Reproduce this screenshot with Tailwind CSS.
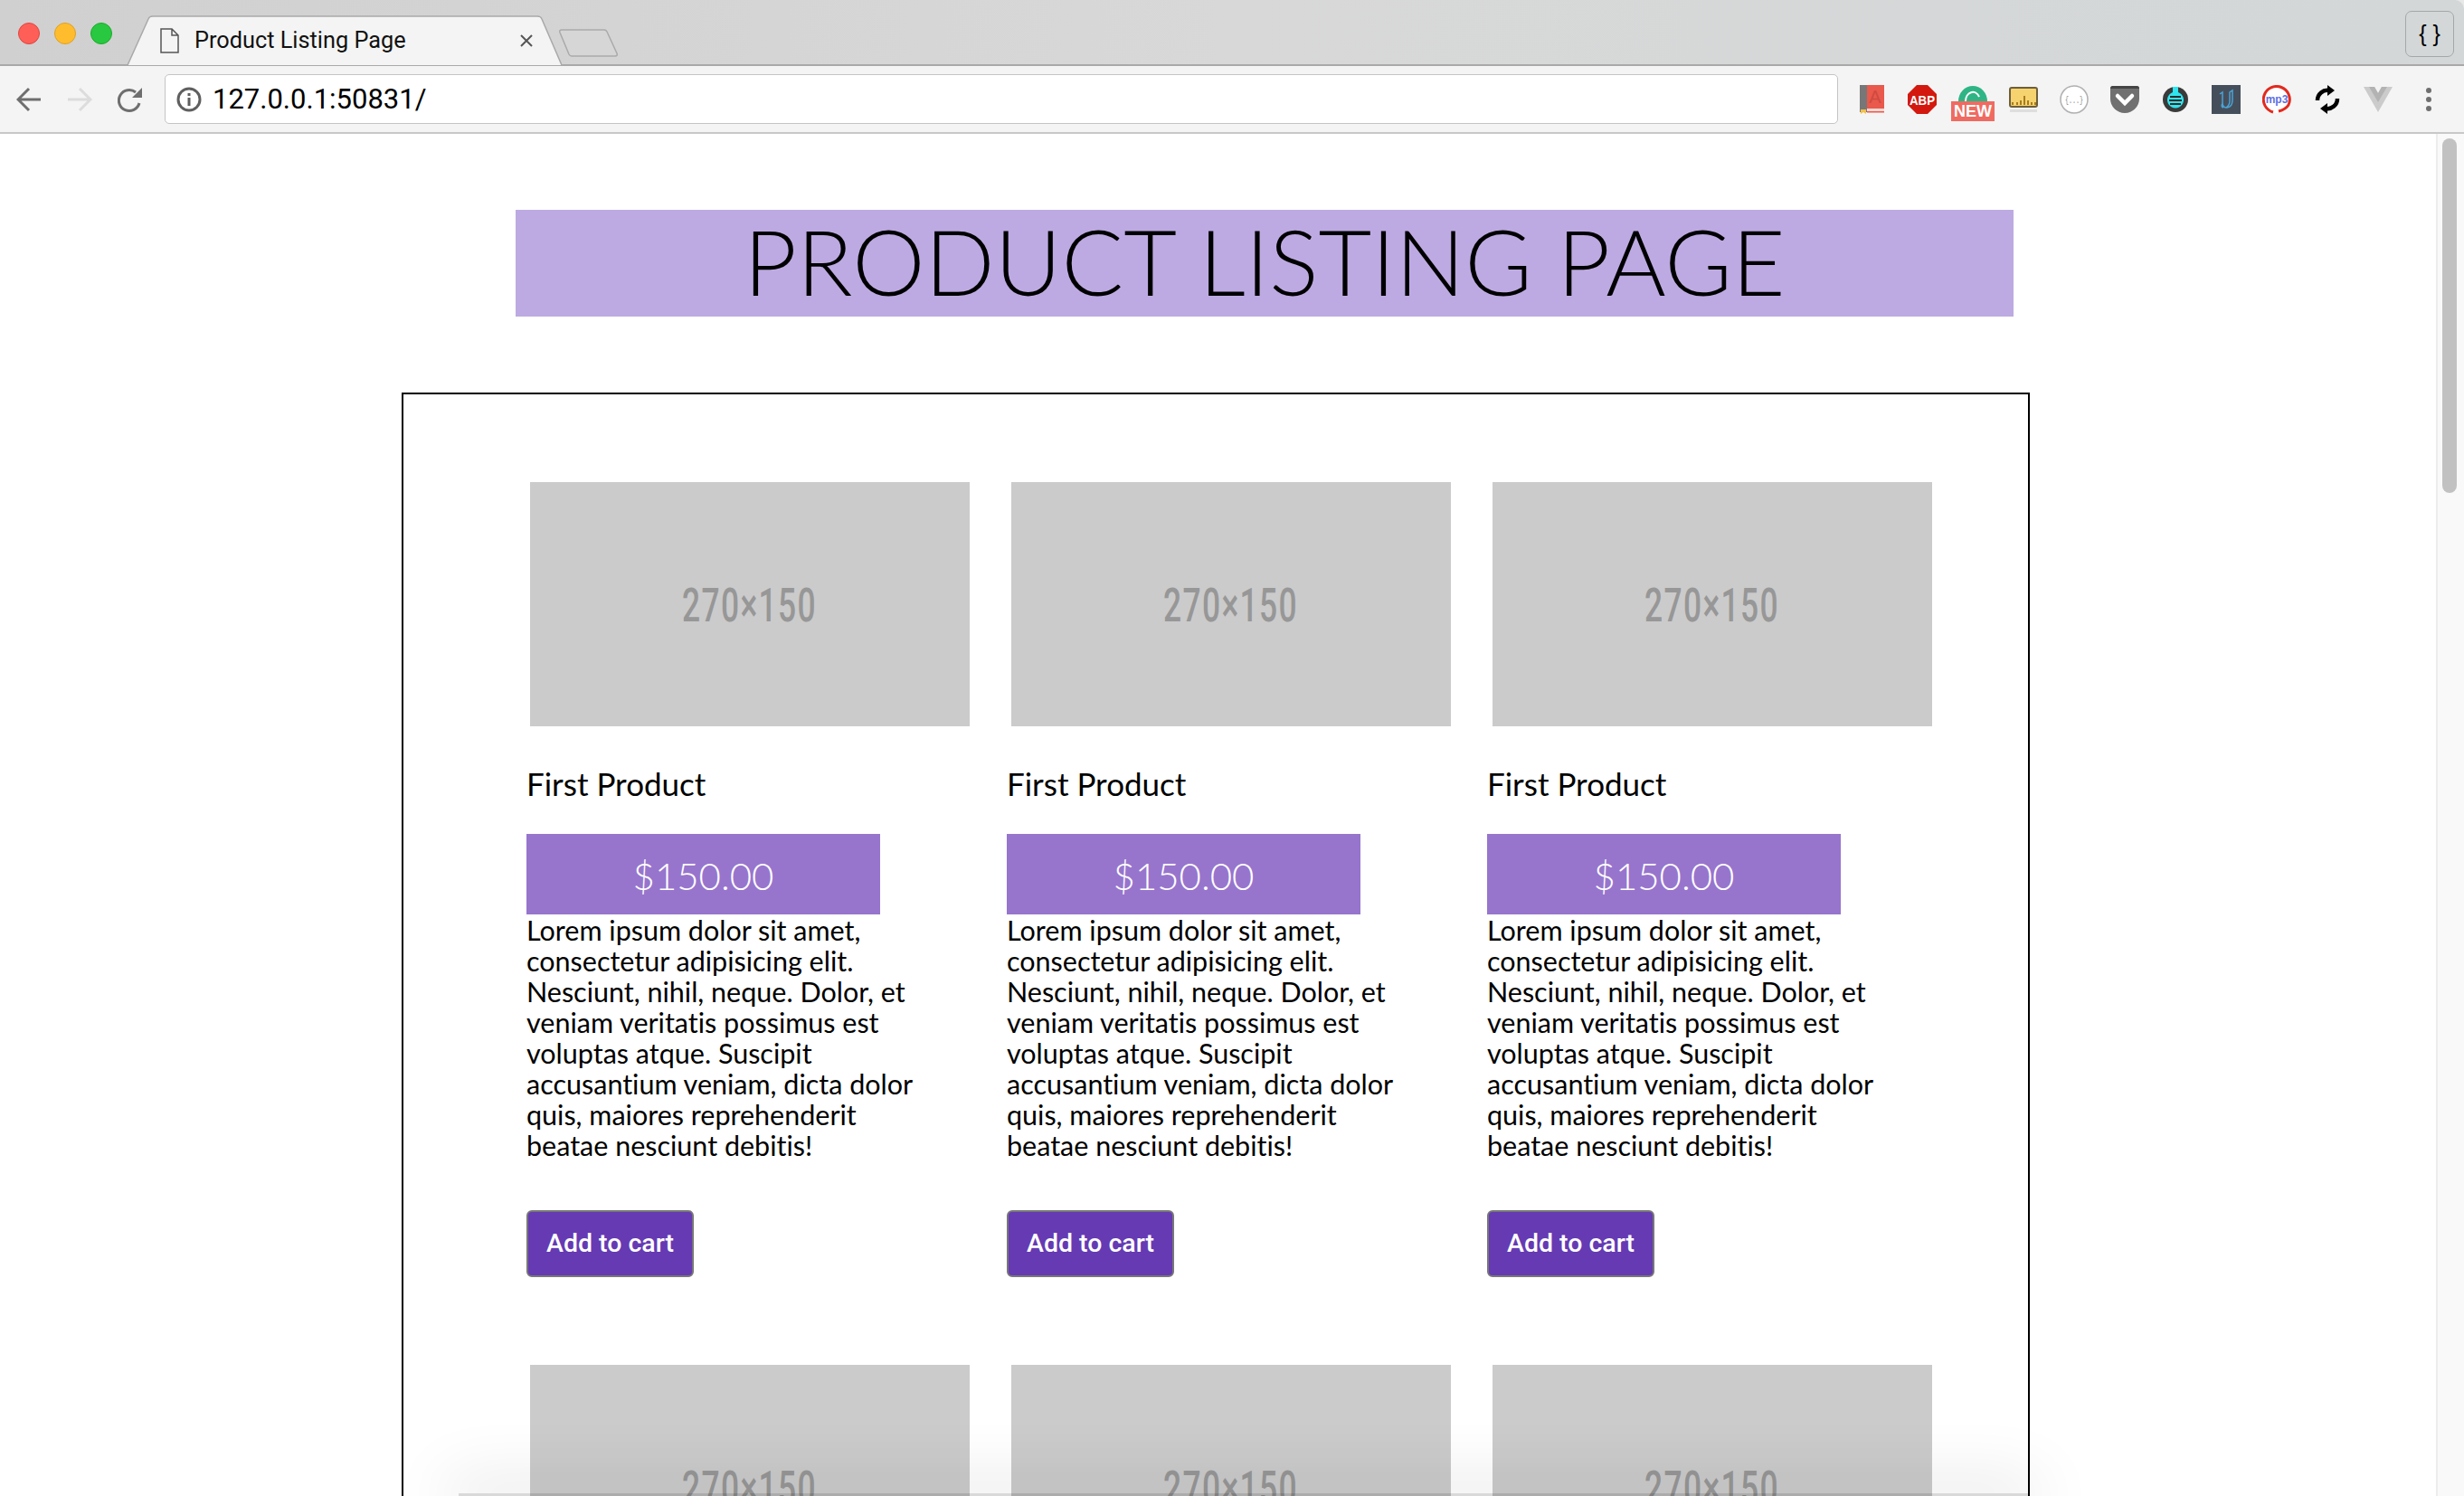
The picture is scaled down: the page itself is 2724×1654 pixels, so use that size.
<!DOCTYPE html>
<html lang="en">
<head>
    <meta charset="UTF-8">
    <title>Product Listing Page</title>
    <script src="https://cdn.jsdelivr.net/npm/@tailwindcss/browser@4"></script>
</head>
<body class="h-[1654px] overflow-hidden bg-[#e8e8e8] text-black font-['Lato','Liberation_Sans',sans-serif] [font-variant-ligatures:none]">
    <div class="relative flex h-[1654px] flex-col overflow-hidden">
        <!-- Tab strip -->
        <div class="flex h-[73px] shrink-0 rounded-tr-[10px] border-b-2 border-[#a9a9a9] bg-gradient-to-r from-[#d0d0d0] via-[#d8d8d8] to-[#d3d7d8] pl-[20px] pr-[11px]">
            <div class="mt-[3px] flex items-center gap-[16px] self-center">
                <span class="size-[24px] rounded-full border border-[#e0443e] bg-[#ff5f57]"></span>
                <span class="size-[24px] rounded-full border border-[#dfa023] bg-[#ffbd2e]"></span>
                <span class="size-[24px] rounded-full border border-[#1aab29] bg-[#28c940]"></span>
            </div>
            <div class="relative z-10 ml-[16px] -mb-[2px] flex h-[56px] w-[483px] items-center self-end pl-[37px] pr-[34px]">
                <svg class="absolute inset-0" width="483" height="56" viewBox="0 0 483 56"><path d="M0 55 H1 L24 4 Q25 1 29 1 H454 Q458 1 459 4 L481 55 H483" fill="#f4f4f4" stroke="#a9a9a9" stroke-width="1.500"/></svg>
                <svg class="relative shrink-0" width="21" height="28" viewBox="0 0 21 28" fill="none" stroke="#555" stroke-width="1.500"><path d="M1 1 H13 L20 8 V27 H1 Z M13 1 V8 H20"/></svg>
                <span class="relative ml-[17px] flex-1 font-['Roboto'] text-[25.300px] leading-none text-[#111]">Product Listing Page</span>
                <svg class="relative" width="14" height="14" viewBox="0 0 14 14" stroke="#555" stroke-width="2"><path d="M1 1 L13 13 M13 1 L1 13"/></svg>
            </div>
            <svg class="-ml-[5px] mb-[8px] self-end" width="66" height="31" viewBox="0 0 66 31"><path d="M3 1 H50 Q52 1 53 3 L64 27 Q65 30 62 30 H14 Q12 30 11 28 L1 4 Q0 1 3 1 Z" fill="#d6d6d6" stroke="#aaa" stroke-width="1.500"/></svg>
            <div class="mt-[12px] ml-auto flex h-[51px] w-[54px] items-center justify-center self-start rounded-[7px] border border-[#a5a8a8] font-['Liberation_Sans'] text-[25px] leading-none text-black">{ }</div>
        </div>
        <!-- Toolbar -->
        <div class="flex h-[75px] shrink-0 items-center border-b-2 border-[#c8c8c8] bg-[#f4f4f4] pl-[18px]">
            <svg class="shrink-0" width="28" height="28" viewBox="0 0 28 28" fill="none" stroke="#6e6e6e" stroke-width="3"><path d="M27 14 H3 M14 2 L2 14 L14 26"/></svg>
            <svg class="ml-[28px] shrink-0" width="28" height="28" viewBox="0 0 28 28" fill="none" stroke="#dcdcdc" stroke-width="3"><path d="M1 14 H25 M14 2 L26 14 L14 26"/></svg>
            <svg class="ml-[28px] shrink-0" width="28" height="30" viewBox="0 0 28 30" fill="none" stroke="#6e6e6e" stroke-width="3"><path d="M24 19 A11.500 11.500 0 1 1 20 7"/><path d="M27 2 V13 H16 Z" fill="#6e6e6e" stroke="none"/></svg>
            <div class="ml-[24px] flex h-[55px] w-[1850px] shrink-0 items-center rounded-[5px] border border-[#c4c4c4] bg-white pl-[12px]">
                <svg width="28" height="28" viewBox="0 0 28 28" fill="none" stroke="#5f5f5f" stroke-width="3"><circle cx="14" cy="14" r="12"/><path d="M14 12 V21 M14 7 V10"/></svg>
                <span class="ml-[12px] font-['Roboto'] text-[31px] leading-none text-black">127.0.0.1:50831/</span>
            </div>
            <!-- Extension icons -->
            <div class="ml-[9px] grid grid-cols-[repeat(12,56px)] items-center justify-items-center">
                <svg width="28" height="32" viewBox="0 0 28 32"><rect x="1" width="27" height="29" fill="#e9594c"/><rect x="1" width="8" height="30" fill="#777"/><path d="M9 26 H28 V29 H9 Z" fill="#f8d9d5"/><rect x="9" y="29" width="19" height="1.500" fill="#e9594c"/><path d="M2 27 H8 V32 L5 30 L2 32 Z" fill="#f2c14a"/><text x="18" y="20" text-anchor="middle" font-family="Liberation Sans" font-size="20" fill="#cf4a3f">A</text></svg>
                <svg width="32" height="32" viewBox="0 0 32 32"><path d="M10 0 H22 L32 10 V22 L22 32 H10 L0 22 V10 Z" fill="#d3190f"/><text x="16" y="21.500" text-anchor="middle" font-family="Liberation Sans" font-weight="700" font-size="14.500" fill="#fff" textLength="28" lengthAdjust="spacingAndGlyphs">ABP</text></svg>
                <div class="relative mt-[8px] h-[40px] w-[48px]">
                    <svg class="absolute left-[8px] top-0" width="32" height="18" viewBox="0 0 32 18"><path d="M0 18 A16 17 0 0 1 32 18 Z" fill="#2fb585"/><path d="M8 18 A8 10 0 0 1 23 13" fill="none" stroke="#fff" stroke-width="2"/></svg>
                    <div class="absolute inset-x-0 bottom-0 flex h-[22px] items-center justify-center bg-[#ef6b61] font-['Liberation_Sans'] text-[18px] font-bold leading-none text-white">NEW</div>
                </div>
                <svg width="32" height="28" viewBox="0 0 32 28"><rect x="1" y="1" width="30" height="21" rx="2" fill="#f6d36f" stroke="#6d5f3b" stroke-width="2"/><path d="M4 20 V17 M9 20 V17 M13 20 V15 M17 20 V10 M21 20 V15 M25 20 V17 M29 20 V17" stroke="#a87c1e" stroke-width="2"/><rect x="1" y="25" width="30" height="3" fill="#dedede"/></svg>
                <svg width="32" height="32" viewBox="0 0 32 32"><circle cx="16" cy="16" r="15" fill="#fff" stroke="#b0b0b0" stroke-width="1.500"/><text x="16" y="20" text-anchor="middle" font-family="Liberation Mono" font-size="11" fill="#888" textLength="20" lengthAdjust="spacingAndGlyphs">{...}</text></svg>
                <svg width="32" height="30" viewBox="0 0 32 30"><path d="M0 3 Q0 0 3 0 H29 Q32 0 32 3 V14 A16 16 0 0 1 0 14 Z" fill="#707070"/><path d="M0 3 Q0 0 3 0 H29 Q32 0 32 3 H0 Z" fill="#444"/><path d="M8 11 L16 19 L24 11" fill="none" stroke="#fff" stroke-width="4.500" stroke-linecap="round"/></svg>
                <svg width="28" height="28" viewBox="0 0 28 28"><circle cx="14" cy="14" r="14" fill="#3a3a3a"/><path d="M11 0 H17 V6 A9 9 0 1 1 11 6 Z" fill="#2ee6f0"/><path d="M8 11 H20 M7 15 H21 M8 19 H20" stroke="#2a2a2a" stroke-width="2"/></svg>
                <svg width="32" height="32" viewBox="0 0 32 32"><rect width="32" height="32" fill="#454f5c"/><path d="M9 10 L12 8 V20 Q12 25 17 25 Q23 24 23 17 V6 L20 8 V18 Q20 22 16 25 M12 20 Q10 24 13 25" fill="none" stroke="#4ba3d4" stroke-width="1.500"/></svg>
                <svg width="32" height="32" viewBox="0 0 32 32"><circle cx="16" cy="16" r="15" fill="#fff"/><path d="M12 30 A14.500 14.500 0 1 1 29 22 Q26 27 18 29" fill="none" stroke="#e22a1f" stroke-width="3"/><text x="16" y="20" text-anchor="middle" font-family="Liberation Sans" font-weight="700" font-size="12" fill="#5d70e6">mp3</text></svg>
                <svg width="28" height="32" viewBox="0 0 28 32" fill="none" stroke="#000" stroke-width="4.500"><path d="M3 17 A11 11 0 0 1 16 6"/><path d="M25 15 A11 11 0 0 1 12 26"/><path d="M14 0 L22 6 L14 12 Z M14 32 L6 26 L14 20 Z" fill="#000" stroke="none"/></svg>
                <svg width="32" height="28" viewBox="0 0 32 28"><path d="M0 0 H12 L16 7 L20 0 H32 L16 28 Z" fill="#cbcbcb"/><path d="M6 0 H12 L16 7 L20 0 H26 L16 17 Z" fill="#b3b3b3"/></svg>
                <svg width="10" height="28" viewBox="0 0 10 28" fill="#6f6f6f"><circle cx="5" cy="4" r="3"/><circle cx="5" cy="14" r="3"/><circle cx="5" cy="24" r="3"/></svg>
            </div>
        </div>
        <!-- Page -->
        <div class="flex min-h-0 flex-1 bg-white">
            <main class="min-w-0 flex-1 pt-[84px]">
                <h1 class="ml-[570px] flex h-[118px] w-[1656px] items-center justify-center bg-[#bdaae2] pb-[4px] text-[101.500px] font-light leading-none text-black">PRODUCT LISTING PAGE</h1>
                <section class="ml-[444px] mt-[84px] w-[1800px] border-2 border-b-0 border-black pl-[136px] pt-[97px]">
                    <div class="grid grid-cols-[repeat(3,531px)]">
                        <article class="h-[976px]">
                            <div class="ml-[4px] flex h-[270px] w-[486px] items-center justify-center bg-[#cbcbcb] pt-[3px]"><span class="inline-block scale-x-[0.68] font-['Roboto'] text-[52px] font-medium tracking-[2px] text-[#979797]">270×150</span></div>
                            <h2 class="mt-[46px] text-[35px] leading-[34px]">First Product</h2>
                            <div class="mt-[39px] flex h-[89px] w-[391px] items-center justify-center bg-[#9775cd] pt-[4px] text-[42px] font-light text-white">$150.00</div>
                            <p class="w-[440px] text-[30.500px] leading-[34px]">Lorem ipsum dolor sit amet,<br>consectetur adipisicing elit.<br>Nesciunt, nihil, neque. Dolor, et<br>veniam veritatis possimus est<br>voluptas atque. Suscipit<br>accusantium veniam, dicta dolor<br>quis, maiores reprehenderit<br>beatae nesciunt debitis!</p>
                            <button class="mt-[55px] flex h-[74px] w-[185px] items-center justify-center rounded-[6px] border-2 border-[#777] bg-[#653ab3] font-['Roboto'] text-[28.500px] font-medium text-white">Add to cart</button>
                        </article>
                        <article class="h-[976px]">
                            <div class="ml-[5px] flex h-[270px] w-[486px] items-center justify-center bg-[#cbcbcb] pt-[3px]"><span class="inline-block scale-x-[0.68] font-['Roboto'] text-[52px] font-medium tracking-[2px] text-[#979797]">270×150</span></div>
                            <h2 class="mt-[46px] text-[35px] leading-[34px]">First Product</h2>
                            <div class="mt-[39px] flex h-[89px] w-[391px] items-center justify-center bg-[#9775cd] pt-[4px] text-[42px] font-light text-white">$150.00</div>
                            <p class="w-[440px] text-[30.500px] leading-[34px]">Lorem ipsum dolor sit amet,<br>consectetur adipisicing elit.<br>Nesciunt, nihil, neque. Dolor, et<br>veniam veritatis possimus est<br>voluptas atque. Suscipit<br>accusantium veniam, dicta dolor<br>quis, maiores reprehenderit<br>beatae nesciunt debitis!</p>
                            <button class="mt-[55px] flex h-[74px] w-[185px] items-center justify-center rounded-[6px] border-2 border-[#777] bg-[#653ab3] font-['Roboto'] text-[28.500px] font-medium text-white">Add to cart</button>
                        </article>
                        <article class="h-[976px]">
                            <div class="ml-[6px] flex h-[270px] w-[486px] items-center justify-center bg-[#cbcbcb] pt-[3px]"><span class="inline-block scale-x-[0.68] font-['Roboto'] text-[52px] font-medium tracking-[2px] text-[#979797]">270×150</span></div>
                            <h2 class="mt-[46px] text-[35px] leading-[34px]">First Product</h2>
                            <div class="mt-[39px] flex h-[89px] w-[391px] items-center justify-center bg-[#9775cd] pt-[4px] text-[42px] font-light text-white">$150.00</div>
                            <p class="w-[440px] text-[30.500px] leading-[34px]">Lorem ipsum dolor sit amet,<br>consectetur adipisicing elit.<br>Nesciunt, nihil, neque. Dolor, et<br>veniam veritatis possimus est<br>voluptas atque. Suscipit<br>accusantium veniam, dicta dolor<br>quis, maiores reprehenderit<br>beatae nesciunt debitis!</p>
                            <button class="mt-[55px] flex h-[74px] w-[185px] items-center justify-center rounded-[6px] border-2 border-[#777] bg-[#653ab3] font-['Roboto'] text-[28.500px] font-medium text-white">Add to cart</button>
                        </article>
                        <article>
                            <div class="ml-[4px] flex h-[270px] w-[486px] items-center justify-center bg-[#cbcbcb] pt-[3px]"><span class="inline-block scale-x-[0.68] font-['Roboto'] text-[52px] font-medium tracking-[2px] text-[#979797]">270×150</span></div>
                        </article>
                        <article>
                            <div class="ml-[5px] flex h-[270px] w-[486px] items-center justify-center bg-[#cbcbcb] pt-[3px]"><span class="inline-block scale-x-[0.68] font-['Roboto'] text-[52px] font-medium tracking-[2px] text-[#979797]">270×150</span></div>
                        </article>
                        <article>
                            <div class="ml-[6px] flex h-[270px] w-[486px] items-center justify-center bg-[#cbcbcb] pt-[3px]"><span class="inline-block scale-x-[0.68] font-['Roboto'] text-[52px] font-medium tracking-[2px] text-[#979797]">270×150</span></div>
                        </article>
                    </div>
                </section>
            </main>
            <!-- Scrollbar -->
            <div class="w-[31px] shrink-0 border-l-2 border-[#ececec] bg-[#f9f9f9] pl-[5px] pr-[8px] pt-[5px]">
                <div class="h-[392px] rounded-full bg-[#c1c1c1]"></div>
            </div>
        </div>
        <!-- Top edge and shadow of the window below -->
        <div class="absolute bottom-0 left-[507px] h-[3px] w-[1735px] bg-black/15 shadow-[0_0_70px_12px_rgba(0,0,0,0.14)]"></div>
    </div>
</body>
</html>
